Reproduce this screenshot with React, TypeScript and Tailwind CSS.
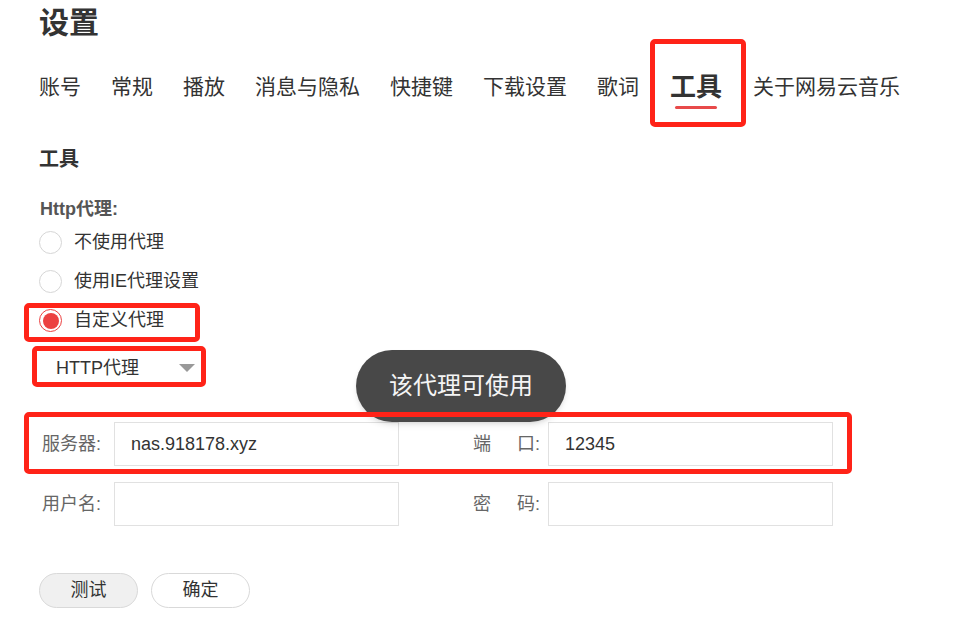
import { useState } from "react";

const tabs = ["账号", "常规", "播放", "消息与隐私", "快捷键", "下载设置", "歌词", "工具", "关于网易云音乐"];
const proxyOptions = ["不使用代理", "使用IE代理设置", "自定义代理"];

function Radio({ checked }: { checked: boolean }) {
  return checked ? (
    <span className="w-[23px] h-[23px] rounded-full border border-[#ec4141] flex items-center justify-center">
      <span className="w-[16px] h-[16px] rounded-full bg-[#ec4141]" />
    </span>
  ) : (
    <span className="w-[23px] h-[23px] rounded-full border border-[#d6d6d6] bg-white" />
  );
}

function Field({ label, value, wide }: { label: string[]; value: string; wide?: boolean }) {
  return (
    <div className="flex items-center">
      <div
        className={`${wide ? "w-[67px]" : "w-[64px]"} flex justify-between text-[18px] text-[#666] leading-[24px]`}
      >
        {label.map((l, i) => (
          <span key={i}>{l}</span>
        ))}
      </div>
      <div className="ml-[8px] w-[285px] h-[44px] border border-[#e1e1e1] flex items-center pl-[16px] text-[18px] text-[#333]">
        {value}
      </div>
    </div>
  );
}

export default function App() {
  const [active] = useState("工具");
  const [proxy] = useState(2);

  return (
    <div
      className="relative w-[957px] h-[635px] bg-white overflow-hidden pl-[39px] text-[#333]"
      style={{ fontFamily: '"Liberation Sans", "Noto Sans CJK SC", sans-serif' }}
    >
      <h1 className="mt-[3px] text-[30px] leading-[40px] font-bold">设置</h1>

      {/* tabs */}
      <div className="mt-[29px] flex items-start gap-[30px]">
        {tabs.map(t =>
          t === active ? (
            <div key={t} className="flex flex-col items-center px-[1px]">
              <span className="text-[26px] leading-[30px] font-bold">{t}</span>
              <span className="mt-[4px] w-[42px] h-[3px] rounded-full bg-[#e84a4a]" />
            </div>
          ) : (
            <span key={t} className="text-[21px] leading-[30px]">{t}</span>
          )
        )}
      </div>

      <h2 className="mt-[36px] text-[20px] leading-[28px] font-bold">工具</h2>

      <div className="mt-[24px] pl-[1px] text-[18px] leading-[24px] font-bold text-[#555]">Http代理:</div>

      <div className="mt-[2px] flex flex-col">
        {proxyOptions.map((o, i) => (
          <div key={o} className="h-[39px] flex items-center gap-[12px]">
            <Radio checked={proxy === i} />
            <span className="text-[18px]">{o}</span>
          </div>
        ))}
      </div>

      {/* select */}
      <div className="mt-[12px] w-[162px] h-[32px] flex items-center justify-between pl-[17px] pr-[6px] text-[18px]">
        <span>HTTP代理</span>
        <span className="w-0 h-0 border-l-[8px] border-r-[8px] border-t-[8px] border-l-transparent border-r-transparent border-t-[#999]" />
      </div>

      {/* form */}
      <div className="mt-[38px] ml-[3px] flex flex-col gap-[16px]">
        <div className="flex gap-[74px]">
          <Field label={["服务器:"]} value="nas.918178.xyz" />
          <Field label={["端", "口:"]} value="12345" wide />
        </div>
        <div className="flex gap-[74px]">
          <Field label={["用户名:"]} value="" />
          <Field label={["密", "码:"]} value="" wide />
        </div>
      </div>

      <div className="mt-[47px] flex gap-[13px]">
        <button className="w-[99px] h-[35px] rounded-full border border-[#d9d9d9] bg-[#f0f0f0] text-[18px]">测试</button>
        <button className="w-[99px] h-[35px] rounded-full border border-[#d9d9d9] bg-white text-[18px]">确定</button>
      </div>

      {/* toast */}
      <div className="absolute left-[356px] top-[350px] w-[210px] h-[72px] rounded-full bg-[#484848] shadow-md flex items-center justify-center text-[24px] text-[#f5f5f5]">
        该代理可使用
      </div>

      {/* annotation boxes */}
      <div className="absolute left-[650px] top-[39px] w-[96px] h-[88px] border-[5px] border-[#ff2318] rounded-[5px] pointer-events-none" />
      <div className="absolute left-[24px] top-[303px] w-[176px] h-[39px] border-[5px] border-[#ff2318] rounded-[5px] pointer-events-none" />
      <div className="absolute left-[32px] top-[346px] w-[174px] h-[41px] border-[5px] border-[#ff2318] rounded-[5px] pointer-events-none" />
      <div className="absolute left-[24px] top-[412px] w-[828px] h-[62px] border-[5px] border-[#ff2318] rounded-[5px] pointer-events-none" />
    </div>
  );
}
